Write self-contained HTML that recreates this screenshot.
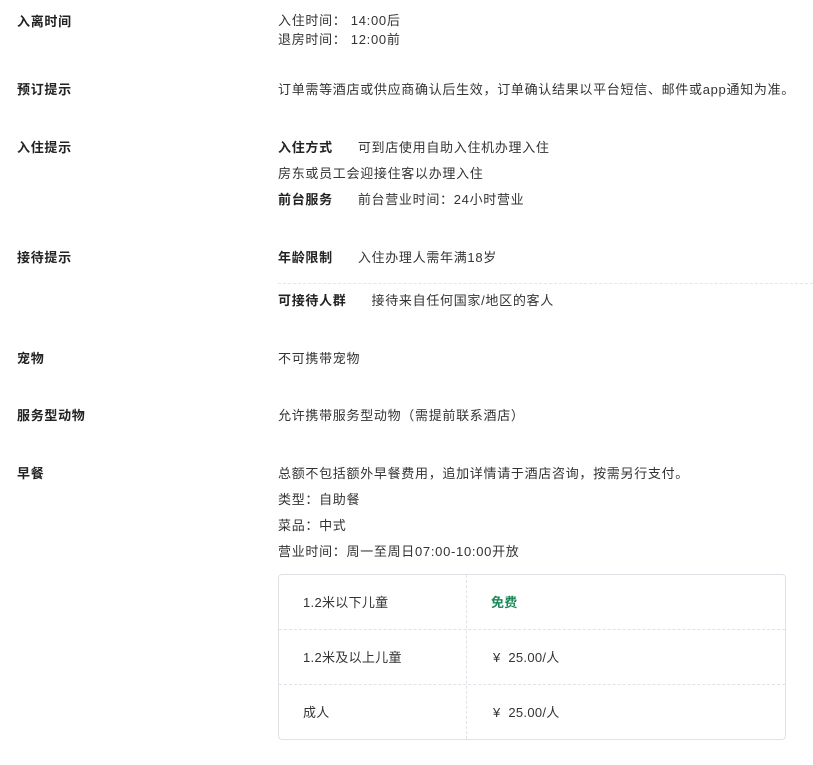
<!DOCTYPE html>
<html><head><meta charset="utf-8"><style>
*{margin:0;padding:0;box-sizing:border-box}
body{width:813px;height:765px;background:#fff;font-family:"Liberation Sans","Noto Sans CJK SC",sans-serif;font-size:13px;color:#333;position:relative;overflow:hidden;letter-spacing:0.7px}
.t{position:absolute;white-space:nowrap;line-height:17px}
.b{font-weight:bold;color:#222}
.sp{display:inline-block}
.tbl{position:absolute;left:278px;top:574px;width:508px;height:166px;border:1px solid #dfe3e8;border-radius:4px;letter-spacing:0.3px}
.hl{position:absolute;left:0;right:0;border-top:1px dashed #dfe3e8}
.vl{position:absolute;top:0;bottom:0;left:187px;border-left:1px dashed #dfe3e8}
</style></head><body>
<div class="t b" style="left:17px;top:13px">入离时间</div>
<div class="t" style="left:278px;top:12px">入住时间：&nbsp;14:00后</div>
<div class="t" style="left:278px;top:31px">退房时间：&nbsp;12:00前</div>

<div class="t b" style="left:17px;top:81px">预订提示</div>
<div class="t" style="left:278px;top:81px">订单需等酒店或供应商确认后生效，订单确认结果以平台短信、邮件或app通知为准。</div>

<div class="t b" style="left:17px;top:139px">入住提示</div>
<div class="t" style="left:278px;top:139px"><span class="b">入住方式</span><span class="sp" style="width:25px"></span>可到店使用自助入住机办理入住</div>
<div class="t" style="left:278px;top:165px">房东或员工会迎接住客以办理入住</div>
<div class="t" style="left:278px;top:191px"><span class="b">前台服务</span><span class="sp" style="width:25px"></span>前台营业时间：24小时营业</div>

<div class="t b" style="left:17px;top:249px">接待提示</div>
<div class="t" style="left:278px;top:249px"><span class="b">年龄限制</span><span class="sp" style="width:25px"></span>入住办理人需年满18岁</div>
<div style="position:absolute;left:278px;width:535px;top:283px;border-top:1px dashed #e3e6ea"></div>
<div class="t" style="left:278px;top:292px"><span class="b">可接待人群</span><span class="sp" style="width:25px"></span>接待来自任何国家/地区的客人</div>

<div class="t b" style="left:17px;top:350px">宠物</div>
<div class="t" style="left:278px;top:350px">不可携带宠物</div>

<div class="t b" style="left:17px;top:407px">服务型动物</div>
<div class="t" style="left:278px;top:407px">允许携带服务型动物（需提前联系酒店）</div>

<div class="t b" style="left:17px;top:465px">早餐</div>
<div class="t" style="left:278px;top:465px">总额不包括额外早餐费用，追加详情请于酒店咨询，按需另行支付。</div>
<div class="t" style="left:278px;top:491px">类型：自助餐</div>
<div class="t" style="left:278px;top:517px">菜品：中式</div>
<div class="t" style="left:278px;top:543px">营业时间：周一至周日07:00-10:00开放</div>

<div class="tbl">
<div class="vl"></div>
<div class="hl" style="top:54px"></div>
<div class="hl" style="top:109px"></div>
<div class="t" style="left:24px;top:19px">1.2米以下儿童</div>
<div class="t b" style="left:212px;top:19px;color:#1a8a5a">免费</div>
<div class="t" style="left:24px;top:74px">1.2米及以上儿童</div>
<div class="t" style="left:214px;top:74px">¥&nbsp;&nbsp;25.00/人</div>
<div class="t" style="left:24px;top:129px">成人</div>
<div class="t" style="left:214px;top:129px">¥&nbsp;&nbsp;25.00/人</div>
</div>
</body></html>
